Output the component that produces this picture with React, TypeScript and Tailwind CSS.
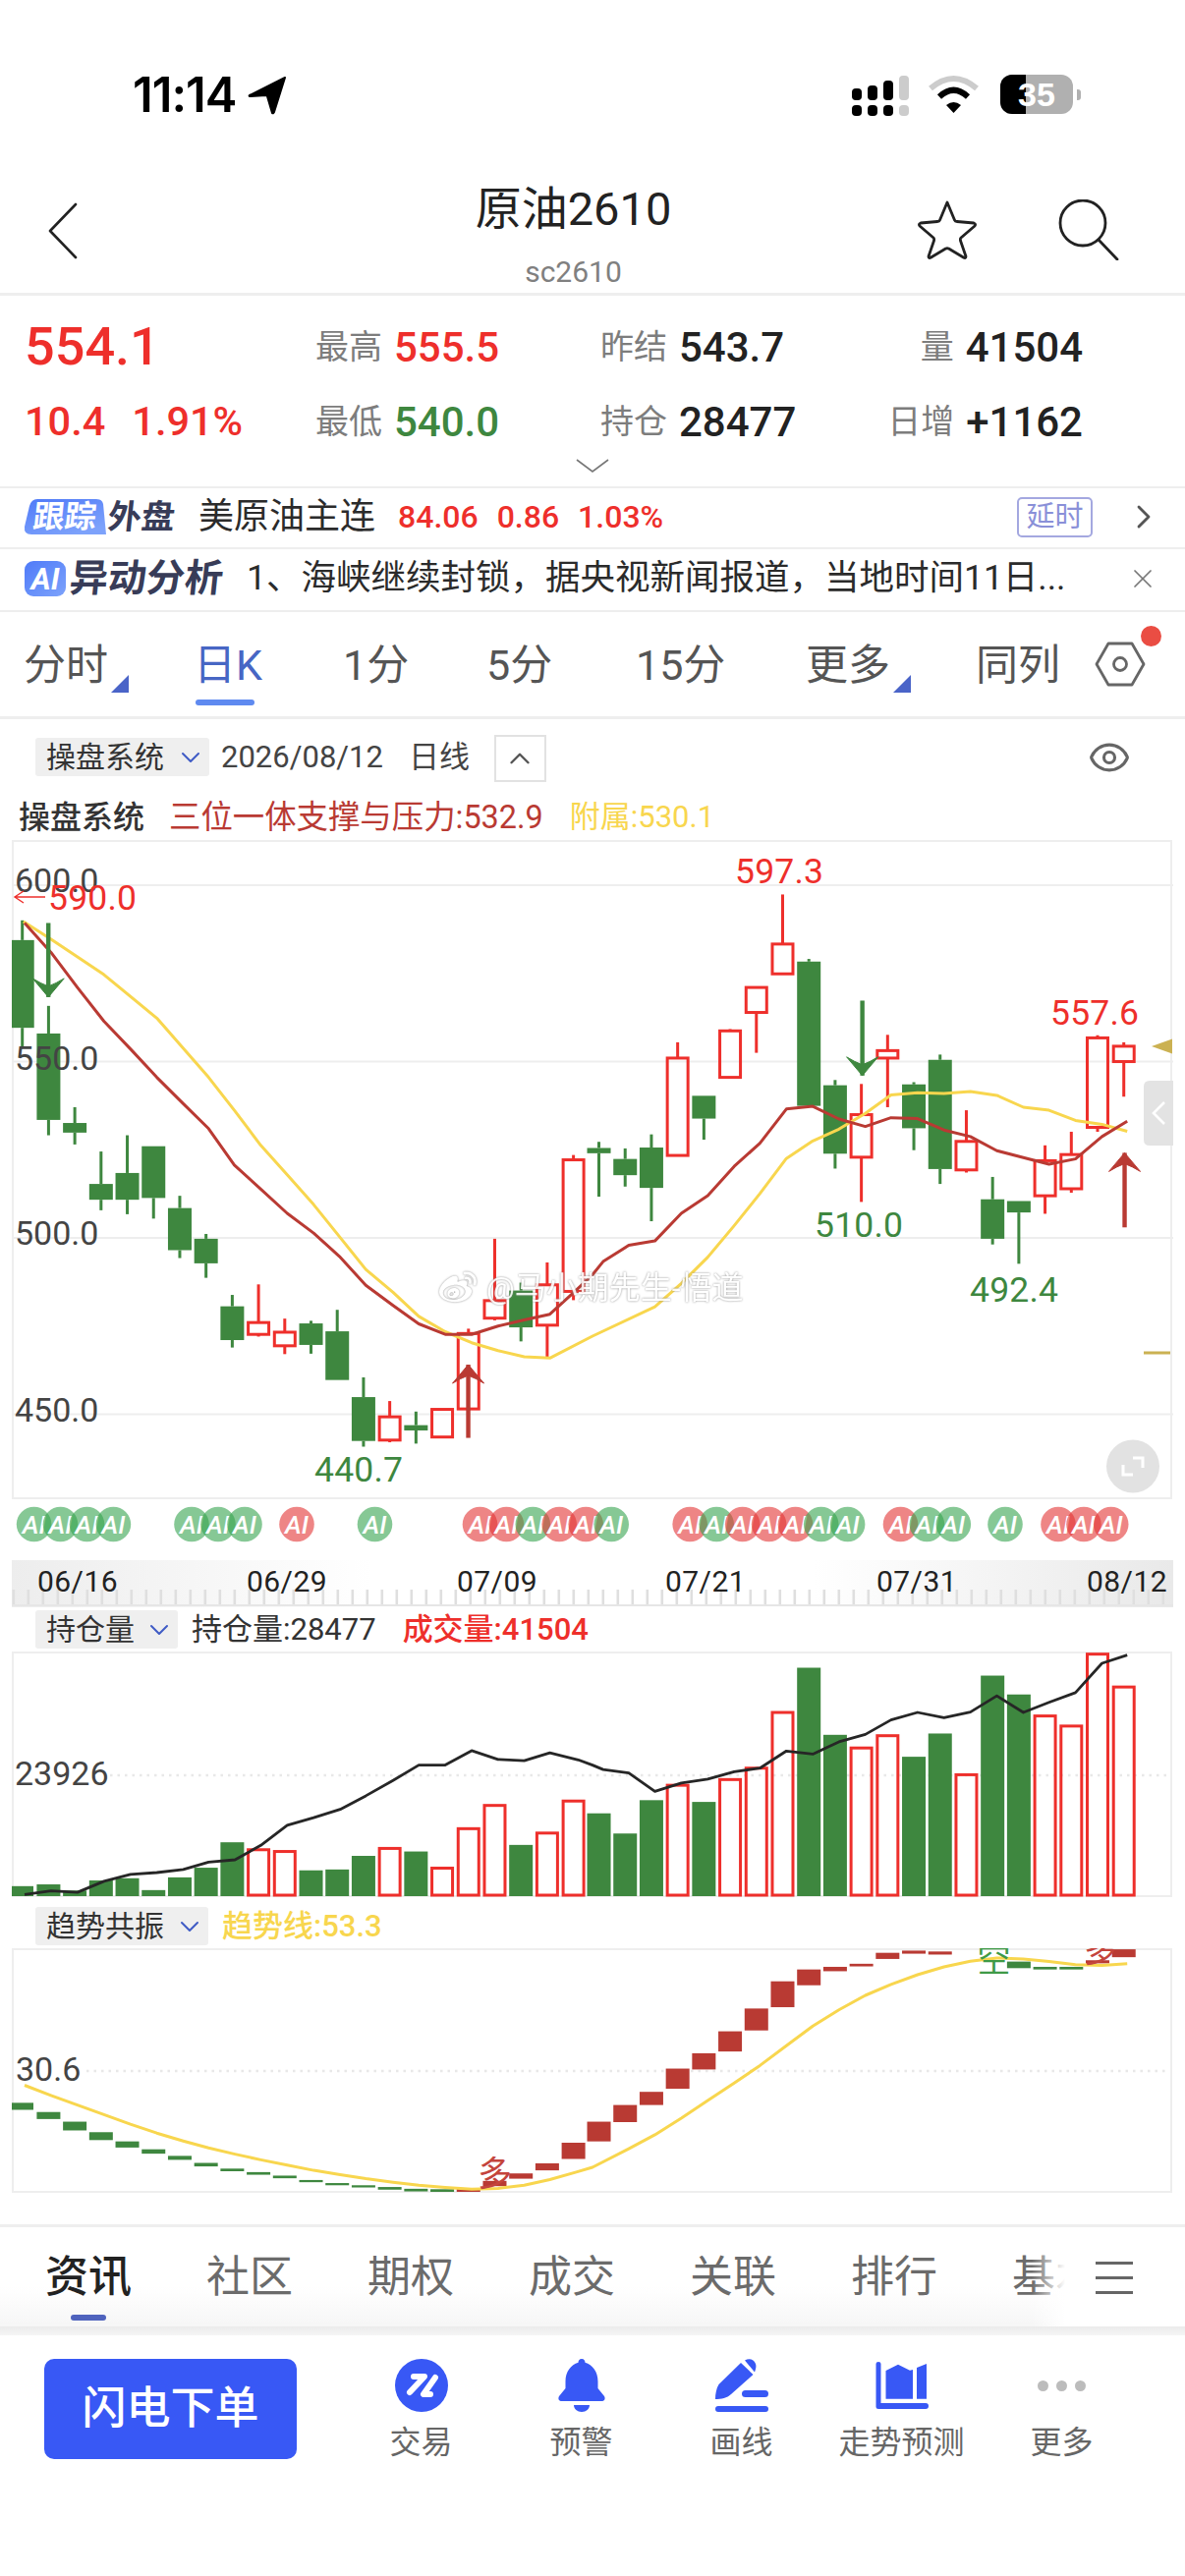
import { ChevronDown, ChevronRight, ChevronUp, Eye, X } from "lucide-react";
import { FaWeibo } from "react-icons/fa";
import type { ReactNode } from "react";

const RED = "#ee2f2b";
const GREEN = "#3e873f";
const DARK_RED = "#b93a33";
const YELLOW = "#f8d64e";

// traced positions: left half and right half of the chart have their own x origin
const lx = (v: number) => v / 2.6;
const rx = (v: number) => 603 + v / 2.6;
const topY = (v: number) => 860 + v / 2.24;
const lowY = (v: number) => 1560 + v / 2.24;
const barX = (i: number) => 22.7 + i * 26.71;

type Candle = [number, number, number, number, "g" | "r"];

const candles: Candle[] = [
  [172, 217, 417, 460, "g"],
  [367, 430, 627, 662, "g"],
  [598, 634, 656, 683, "g"],
  [699, 773, 809, 833, "g"],
  [662, 748, 809, 842, "g"],
  [687, 687, 805, 852, "g"],
  [800, 828, 924, 942, "g"],
  [887, 898, 954, 987, "g"],
  [1026, 1052, 1129, 1146, "g"],
  [1002, 1089, 1116, 1121, "r"],
  [1080, 1111, 1142, 1161, "r"],
  [1085, 1091, 1140, 1160, "g"],
  [1060, 1109, 1220, 1220, "g"],
  [1214, 1259, 1359, 1372, "g"],
  [1268, 1304, 1357, 1362, "r"],
  [1292, 1323, 1335, 1365, "g"],
  [1287, 1287, 1350, 1352, "r"],
  [1103, 1114, 1286, 1290, "r"],
  [898, 1039, 1079, 1084, "r"],
  [998, 1016, 1100, 1132, "g"],
  [952, 1003, 1095, 1170, "r"],
  [707, 718, 1018, 1038, "r"],
  [677, 691, 703, 802, "g"],
  [692, 716, 753, 779, "g"],
  [660, 690, 782, 858, "g"],
  [450, 486, 708, 708, "r"],
  [572, 572, 624, 672, "g"],
  [420, 424, 530, 533, "r"],
  [325, 325, 382, 474, "r"],
  [113, 226, 294, 294, "r"],
  [260, 266, 595, 595, "g"],
  [536, 548, 704, 738, "g"],
  [545, 615, 712, 814, "r"],
  [433, 469, 486, 598, "r"],
  [541, 546, 646, 696, "g"],
  [478, 490, 739, 773, "g"],
  [605, 676, 741, 747, "r"],
  [757, 808, 898, 911, "g"],
  [812, 812, 838, 955, "g"],
  [685, 720, 800, 841, "r"],
  [654, 706, 784, 793, "r"],
  [434, 440, 644, 654, "r"],
  [450, 459, 494, 574, "r"],
];

const volumes: [number, "g" | "r"][] = [
  [806, "g"], [802, "g"], [816, "g"], [793, "g"], [788, "g"], [815, "g"], [786, "g"], [764, "g"], [706, "g"],
  [723, "r"], [727, "r"], [770, "g"], [768, "g"], [737, "g"], [720, "r"], [727, "g"], [765, "r"], [675, "r"],
  [622, "r"], [712, "g"], [685, "r"], [612, "r"], [640, "g"], [686, "g"], [610, "g"], [576, "r"], [614, "g"],
  [563, "r"], [537, "r"], [410, "r"], [308, "g"], [461, "g"], [491, "r"], [463, "r"], [511, "g"], [458, "g"],
  [552, "r"], [326, "g"], [369, "g"], [418, "r"], [441, "r"], [277, "r"], [352, "r"],
];

const trendBars: [number, number, "g" | "r"][] = [
  [1300, 1316, "g"], [1321, 1337, "g"], [1343, 1363, "g"], [1367, 1385, "g"], [1388, 1402, "g"], [1406, 1416, "g"],
  [1421, 1430, "g"], [1437, 1445, "g"], [1450, 1456, "g"], [1458, 1464, "g"], [1466, 1472, "g"], [1476, 1481, "g"],
  [1483, 1488, "g"], [1488, 1493, "g"], [1492, 1498, "g"], [1496, 1502, "g"], [1497, 1503, "g"], [1496, 1503, "r"],
  [1478, 1490, "r"], [1461, 1473, "r"], [1438, 1454, "r"], [1391, 1428, "r"], [1343, 1388, "r"], [1305, 1344, "r"],
  [1275, 1305, "r"], [1222, 1268, "r"], [1187, 1224, "r"], [1137, 1183, "r"], [1085, 1135, "r"], [1023, 1082, "r"],
  [996, 1032, "r"], [990, 1000, "r"], [983, 989, "r"], [958, 972, "r"], [953, 960, "r"], [955, 962, "r"],
  [940, 945, "r"], [946, 950, "g"], [978, 993, "g"], [990, 996, "g"], [990, 996, "g"], [975, 982, "r"], [950, 968, "r"],
];

const yellowLine: [number, number][] = [
  [lx(62), 175], [lx(135), 215], [lx(275), 296], [lx(415), 395], [lx(552), 530], [lx(620), 605], [lx(690), 685],
  [lx(760), 752], [lx(830), 820], [lx(900), 895], [lx(968), 968], [lx(1040), 1020], [lx(1108), 1075], [lx(1178), 1110],
  [lx(1248), 1135], [lx(1318), 1153], [lx(1387), 1167], [lx(1455), 1170], [rx(0), 1120], [rx(165), 1053], [rx(235), 1000],
  [rx(305), 940], [rx(373), 870], [rx(443), 795], [rx(513), 715], [rx(583), 675], [rx(652), 648], [rx(722), 612],
  [rx(790), 570], [rx(860), 565], [rx(930), 567], [rx(1000), 562], [rx(1070), 571], [rx(1140), 598], [rx(1208), 605],
  [rx(1278), 628], [rx(1348), 637], [rx(1415), 653],
];

const redLine: [number, number][] = [
  [lx(65), 178], [lx(135), 245], [lx(205), 325], [lx(275), 402], [lx(345), 465], [lx(415), 530], [lx(485), 590],
  [lx(552), 647], [lx(620), 730], [lx(690), 785], [lx(760), 840], [lx(830), 885], [lx(898), 938], [lx(968), 1004],
  [lx(1040), 1050], [lx(1108), 1092], [lx(1178), 1116], [lx(1248), 1116], [lx(1318), 1097], [lx(1387), 1083], [lx(1455), 1070],
  [lx(1525), 1015], [rx(0), 980], [rx(28), 950], [rx(96), 913], [rx(165), 903], [rx(235), 840], [rx(305), 800],
  [rx(375), 733], [rx(443), 680], [rx(513), 602], [rx(583), 596], [rx(652), 625], [rx(722), 642], [rx(790), 622],
  [rx(860), 624], [rx(930), 650], [rx(1000), 665], [rx(1070), 697], [rx(1140), 713], [rx(1208), 728], [rx(1278), 716],
  [rx(1348), 665], [rx(1415), 630],
];

const holdLine: [number, number][] = [
  [lx(65), 825], [lx(135), 817], [lx(205), 820], [lx(275), 795], [lx(345), 779], [lx(415), 775], [lx(485), 768],
  [lx(552), 751], [lx(622), 746], [lx(690), 713], [lx(760), 667], [lx(830), 650], [lx(900), 631], [lx(968), 600],
  [lx(1040), 565], [lx(1108), 530], [lx(1178), 530], [lx(1248), 497], [lx(1318), 517], [lx(1387), 520], [lx(1455), 502],
  [lx(1530), 518], [rx(0), 530], [rx(28), 540], [rx(96), 548], [rx(165), 590], [rx(235), 571], [rx(305), 562],
  [rx(375), 545], [rx(443), 537], [rx(513), 498], [rx(583), 505], [rx(652), 477], [rx(722), 460], [rx(790), 427],
  [rx(860), 410], [rx(930), 422], [rx(1000), 409], [rx(1070), 372], [rx(1140), 410], [rx(1208), 387], [rx(1278), 365],
  [rx(1348), 298], [rx(1415), 279],
];

const trendLine: [number, number][] = [
  [lx(65), 1260], [lx(135), 1283], [lx(205), 1305], [lx(275), 1327], [lx(345), 1349], [lx(415), 1369], [lx(485), 1387],
  [lx(552), 1403], [lx(622), 1417], [lx(690), 1430], [lx(760), 1442], [lx(830), 1454], [lx(900), 1464], [lx(968), 1473],
  [lx(1040), 1481], [lx(1108), 1488], [lx(1178), 1493], [lx(1248), 1497], [lx(1318), 1495], [lx(1387), 1488], [lx(1455), 1475],
  [lx(1525), 1458], [rx(0), 1447], [rx(96), 1405], [rx(165), 1373], [rx(235), 1335], [rx(305), 1295], [rx(375), 1255],
  [rx(443), 1215], [rx(513), 1170], [rx(583), 1125], [rx(652), 1088], [rx(722), 1055], [rx(790), 1030], [rx(860), 1008],
  [rx(930), 990], [rx(1000), 977], [rx(1070), 970], [rx(1140), 972], [rx(1208), 978], [rx(1278), 985], [rx(1348), 987],
  [rx(1415), 983],
];

const aiBadges: [number, "g" | "r"][] = [
  [34.6, "g"], [61.5, "g"], [88.5, "g"], [115.4, "g"], [195, "g"], [222, "g"], [249, "g"], [302, "r"], [381.5, "g"],
  [488.5, "r"], [515.4, "r"], [542.3, "g"], [569.2, "r"], [596.2, "r"], [622.2, "g"], [702.2, "r"], [729.2, "g"],
  [755.7, "r"], [782.6, "r"], [809.5, "r"], [835.7, "g"], [862.6, "g"], [916.5, "r"], [943.4, "g"], [970.3, "g"],
  [1023, "g"], [1077, "r"], [1103, "r"], [1130.7, "r"],
];

const toPoints = (line: [number, number][], y: (v: number) => number) =>
  line.map(([x, v]) => `${x.toFixed(1)},${y(v).toFixed(1)}`).join(" ");

function AxisLabel({ y, children }: { y: number; children: ReactNode }) {
  return (
    <text x={15} y={y} fill="#444" fontSize={34}>
      {children}
    </text>
  );
}

function PriceMark({ x, y, children, color }: { x: number; y: number; children: ReactNode; color: string }) {
  return (
    <text x={x} y={y} fill={color} fontSize={35.5} letterSpacing={0.2}>
      {children}
    </text>
  );
}

function Arrow({ x, from, to, color }: { x: number; from: number; to: number; color: string }) {
  const dir = to > from ? -1 : 1;
  return (
    <g>
      <rect x={x - 2.2} y={Math.min(from, to)} width={4.4} height={Math.abs(to - from)} fill={color} />
      <path
        d={`M${x} ${to} L${x + 16} ${to + dir * 19} Q${x + 8} ${to + dir * 14} ${x} ${to + dir * 11} Q${x - 8} ${to + dir * 14} ${x - 16} ${to + dir * 19} Z`}
        fill={color}
        stroke={color}
        strokeWidth={1}
      />
    </g>
  );
}

function MainChart() {
  return (
    <div className="relative h-[718px] w-full">
      <svg width={1206} height={718} viewBox="0 855 1206 718" className="block">
        <defs>
          <clipPath id="mainClip">
            <rect x={12} y={855} width={1182} height={670} />
          </clipPath>
        </defs>
        <rect x={13} y={856} width={1179} height={669} fill="none" stroke="#eeeeee" strokeWidth={2} />
        {[901, 1080.5, 1260, 1439.5].map((y) => (
          <rect key={y} x={13} y={y - 1} width={1181} height={2} fill="#eeeeee" />
        ))}
        <g clipPath="url(#mainClip)">
          {candles.map(([wickTop, bodyTop, bodyBottom, wickBottom, kind], i) => {
            const x = i < 22 ? barX(i) : barX(i) - 0.8;
            const color = kind === "g" ? GREEN : RED;
            return (
              <g key={i}>
                <rect x={x - 1.5} y={topY(wickTop)} width={3} height={topY(bodyTop) - topY(wickTop)} fill={color} />
                <rect x={x - 1.5} y={topY(bodyBottom)} width={3} height={topY(wickBottom) - topY(bodyBottom)} fill={color} />
                {kind === "g" ? (
                  <rect x={x - 12} y={topY(bodyTop)} width={24} height={topY(bodyBottom) - topY(bodyTop)} fill={color} />
                ) : (
                  <rect
                    x={x - 10.5}
                    y={topY(bodyTop)}
                    width={21}
                    height={Math.max(topY(bodyBottom) - topY(bodyTop), 4)}
                    fill="none"
                    stroke={color}
                    strokeWidth={3}
                  />
                )}
              </g>
            );
          })}
          <polyline points={toPoints(yellowLine, topY)} fill="none" stroke={YELLOW} strokeWidth={3} strokeLinejoin="round" />
          <polyline points={toPoints(redLine, topY)} fill="none" stroke={DARK_RED} strokeWidth={3} strokeLinejoin="round" />
        </g>

        <Arrow x={lx(128)} from={topY(178)} to={topY(347)} color={GREEN} />
        <Arrow x={rx(714)} from={topY(355)} to={topY(526)} color={GREEN} />
        <Arrow x={lx(1239)} from={topY(1352)} to={topY(1185)} color={DARK_RED} />
        <Arrow x={rx(1408)} from={topY(872)} to={topY(702)} color={DARK_RED} />

        <AxisLabel y={908}>600.0</AxisLabel>
        <AxisLabel y={1088.5}>550.0</AxisLabel>
        <AxisLabel y={1267}>500.0</AxisLabel>
        <AxisLabel y={1447}>450.0</AxisLabel>

        <path d="M46 913 H15 M24 907 L15 913 L24 919" fill="none" stroke={RED} strokeWidth={1.4} />
        <PriceMark x={49} y={926} color={RED}>590.0</PriceMark>
        <PriceMark x={748} y={899} color={RED}>597.3</PriceMark>
        <PriceMark x={1069} y={1043} color={RED}>557.6</PriceMark>
        <PriceMark x={829} y={1259} color={GREEN}>510.0</PriceMark>
        <PriceMark x={987} y={1325} color={GREEN}>492.4</PriceMark>
        <PriceMark x={320} y={1508} color={GREEN}>440.7</PriceMark>

        <path d="M1172 1065 L1193 1057.5 V1072.5 Z" fill="#cbb152" />
        <rect x={1164} y={1375.5} width={27} height={3} fill="#cbb152" />

        <path d="M1194 1100 H1170 Q1164 1100 1164 1106 V1160 Q1164 1166 1170 1166 H1194 Z" fill="#e3e3e3" />
        <path d="M1185 1122 L1174 1133 L1185 1144" fill="none" stroke="#ffffff" strokeWidth={2.6} />

        <circle cx={1153} cy={1492.5} r={27} fill="#e2e2e2" />
        <path d="M1153 1484 H1163 V1494 M1143 1491 V1501 H1153" fill="none" stroke="#ffffff" strokeWidth={3} />

        {aiBadges.map(([x, kind], i) => (
          <g key={i}>
            <circle cx={x} cy={1551.5} r={17.8} fill={kind === "g" ? "#35a44e" : "#e33434"} opacity={0.6} />
            <text x={x} y={1560.5} textAnchor="middle" fill="#ffffff" fontSize={26} fontStyle="italic" fontWeight={500}>
              AI
            </text>
          </g>
        ))}
      </svg>
      <div className="absolute left-[444px] top-[437px] flex items-center gap-[7px] text-[32px] leading-none text-white opacity-90 [filter:drop-shadow(0_0_1px_#8a8a8a)]">
        <FaWeibo className="h-[38px] w-[44px]" />
        <span>@马小期先生-悟道</span>
      </div>
    </div>
  );
}

function TimeAxis() {
  const ticks = Array.from({ length: 79 }, (_, i) => 12.5 + i * 15);
  const dates = [
    ["06/16", 79],
    ["06/29", 292],
    ["07/09", 506],
    ["07/21", 718],
    ["07/31", 933],
    ["08/12", 1147],
  ] as const;
  return (
    <svg width={1206} height={66} viewBox="0 1573 1206 66" className="block">
      <defs>
        <linearGradient id="axisFade" x1="0" x2="1" y1="0" y2="0">
          <stop offset="0" stopColor="#ededed" />
          <stop offset="0.31" stopColor="#ffffff" />
          <stop offset="0.69" stopColor="#ffffff" />
          <stop offset="1" stopColor="#e9e9e9" />
        </linearGradient>
      </defs>
      <rect x={12} y={1588} width={1182} height={48} fill="url(#axisFade)" />
      {ticks.map((x) => (
        <rect key={x} x={x} y={1618} width={2.6} height={16} fill="#dfdfdf" />
      ))}
      <rect x={12} y={1633} width={1182} height={2} fill="#e6e6e6" />
      {dates.map(([label, x]) => (
        <text key={label} x={x} y={1620} textAnchor="middle" fill="#222222" fontSize={30} letterSpacing={0.4}>
          {label}
        </text>
      ))}
    </svg>
  );
}

function VolumeChart() {
  return (
    <svg width={1206} height={251} viewBox="0 1681 1206 251" className="block">
      <rect x={13} y={1682} width={1179} height={248} fill="none" stroke="#eeeeee" strokeWidth={2} />
      <line x1={112} x2={1190} y1={1807} y2={1807} stroke="#e8e8e8" strokeWidth={2.5} strokeDasharray="2.5 5" />
      {volumes.map(([top, kind], i) => {
        const x = i < 22 ? barX(i) : barX(i) - 0.8;
        const y = lowY(top);
        return kind === "g" ? (
          <rect key={i} x={i === 0 ? 12 : x - 12} y={y} width={i === 0 ? 22 : 24} height={1930 - y} fill={GREEN} />
        ) : (
          <rect key={i} x={x - 10.5} y={y} width={21} height={1929 - y} fill="none" stroke={RED} strokeWidth={3} />
        );
      })}
      <polyline points={toPoints(holdLine, lowY)} fill="none" stroke="#262626" strokeWidth={2.8} strokeLinejoin="round" />
      <text x={15} y={1817} fill="#444" fontSize={34}>
        23926
      </text>
    </svg>
  );
}

function TrendChart() {
  return (
    <svg width={1206} height={250} viewBox="0 1983 1206 250" className="block">
      <defs>
        <clipPath id="trendClip">
          <rect x={12} y={1983} width={1180} height={249} />
        </clipPath>
      </defs>
      <rect x={13} y={1984} width={1179} height={247} fill="none" stroke="#eeeeee" strokeWidth={2} />
      <line x1={88} x2={1190} y1={2108} y2={2108} stroke="#e8e8e8" strokeWidth={2.5} strokeDasharray="2.5 5" />
      <g clipPath="url(#trendClip)">
        {trendBars.map(([top, bottom, kind], i) => {
          const x = i < 22 ? barX(i) : barX(i) - 0.8;
          return (
            <rect
              key={i}
              x={i === 0 ? 12 : x - 12}
              y={lowY(top)}
              width={i === 0 ? 22 : 24}
              height={lowY(bottom) - lowY(top)}
              fill={kind === "g" ? GREEN : DARK_RED}
            />
          );
        })}
        <polyline points={toPoints(trendLine, lowY)} fill="none" stroke={YELLOW} strokeWidth={3} strokeLinejoin="round" />
        <text x={503.5} y={2225} textAnchor="middle" fill="#c4443c" fontSize={35}>
          多
        </text>
        <text x={1011.5} y={2007} textAnchor="middle" fill="#3f9a47" fontSize={34}>
          空
        </text>
        <text x={1119.5} y={1997} textAnchor="middle" fill="#c4443c" fontSize={33}>
          多
        </text>
      </g>
      <text x={16} y={2118} fill="#444" fontSize={34}>
        30.6
      </text>
    </svg>
  );
}

function SelectChip({ label, width }: { label: string; width: string }) {
  return (
    <div className={`flex h-[39px] items-center justify-between rounded-[3px] bg-[#efefef] pl-[11px] pr-[3px] text-[30px] text-[#333] ${width}`}>
      <span>{label}</span>
      <ChevronDown size={32} strokeWidth={1.5} className="text-[#3f5bc5]" />
    </div>
  );
}

function Triangle() {
  return <span className="absolute -bottom-[2px] -right-[21px] h-[18px] w-[18px] bg-[#4a64c8] [clip-path:polygon(100%_0,100%_100%,0_100%)]" />;
}

function StatusBar() {
  return (
    <div className="flex h-[170px] items-start justify-between pl-[135px] pr-[106px] pt-[72px]">
      <div className="flex items-center gap-[12px]">
        <span className="font-['Inter',sans-serif] text-[49px] font-semibold leading-[50px] tracking-[-1px] text-black">11:14</span>
        <svg width={40} height={40} viewBox="0 0 40 40" fill="#000">
          <path d="M38 2 L2 20 Q1 21 3 21 L19 20 Q20 20 20 21 L25 38 Q26 39 27 37 Z" stroke="#000" strokeWidth={2} strokeLinejoin="round" />
        </svg>
      </div>
      <div className="flex items-start pt-[4px]">
        <svg width={60} height={42} viewBox="0 0 60 42" className="mr-[19px] mt-[1px]">
          <rect x={1} y={13} width={10} height={12} rx={4} fill="#000" />
          <rect x={17} y={10} width={10} height={15} rx={4} fill="#000" />
          <rect x={33} y={5} width={10} height={20} rx={4} fill="#000" />
          <rect x={49} y={0} width={10} height={25} rx={4} fill="#ccc" />
          <rect x={1} y={30} width={10} height={11} rx={4} fill="#000" />
          <rect x={17} y={30} width={10} height={11} rx={4} fill="#000" />
          <rect x={33} y={30} width={10} height={11} rx={4} fill="#000" />
          <rect x={49} y={30} width={10} height={11} rx={4} fill="#ccc" />
        </svg>
        <svg width={51} height={40} viewBox="0 0 51 40" className="mr-[22px]">
          <path d="M2 14 Q25.5 -6 49 14" fill="none" stroke="#ccc" strokeWidth={6} />
          <path d="M11 22.5 Q25.5 9 40 22.5" fill="none" stroke="#000" strokeWidth={6} />
          <path d="M18 31 Q25.5 25 33 31 L25.5 39 Z" fill="#000" />
        </svg>
        <div className="flex items-center">
          <div className="relative flex h-[40px] w-[74px] items-center justify-center overflow-hidden rounded-[12px] bg-[#b0b0b0]">
            <span className="absolute inset-y-0 left-0 w-[26px] bg-black" />
            <span className="relative font-['Liberation_Sans',sans-serif] text-[34px] font-bold leading-none text-white">35</span>
          </div>
          <span className="ml-[4px] h-[11px] w-[4px] rounded-r-[3px] bg-[#b0b0b0]" />
        </div>
      </div>
    </div>
  );
}

function Header() {
  return (
    <div className="flex h-[131px] items-start border-b-[3px] border-[#eeeeee]">
      <div className="w-[485px] pl-[46px] pt-[36px]">
        <svg width={36} height={58} viewBox="0 0 36 58">
          <path d="M31 2 L5 29 L31 56" fill="none" stroke="#222" strokeWidth={2.6} strokeLinecap="round" strokeLinejoin="round" />
        </svg>
      </div>
      <div className="flex w-[197px] flex-col items-center pt-[14px]">
        <span className="whitespace-nowrap text-[47px] leading-[58px] text-[#222]">原油2610</span>
        <span className="mt-[17px] text-[30px] leading-[36px] text-[#808080]">sc2610</span>
      </div>
      <div className="ml-[251px] flex items-start gap-[82px] pt-[33px]">
        <svg width={62} height={62} viewBox="0 0 62 62">
          <path
            d="M31 3 L38.5 21 Q39 22.5 41 22.5 L58 24 Q60.5 25 59 27 L45 39 Q44 40 44.5 42 L50 58 Q50 60.5 47.5 59 L32.5 50 Q31 49.5 29.5 50 L14.5 59 Q12 60.5 12 58 L17.5 42 Q18 40 17 39 L3 27 Q1.5 25 4 24 L21 22.5 Q23 22.5 23.5 21 Z"
            fill="none"
            stroke="#222"
            strokeWidth={2.8}
            strokeLinejoin="round"
          />
        </svg>
        <svg width={62} height={62} viewBox="0 0 62 62">
          <circle cx={25} cy={24} r={23} fill="none" stroke="#222" strokeWidth={2.8} />
          <path d="M41 41 L60 61" stroke="#222" strokeWidth={2.8} strokeLinecap="round" />
        </svg>
      </div>
    </div>
  );
}

function Stat({ label, value, color = "#222", right }: { label: string; value: string; color?: string; right?: boolean }) {
  return (
    <div className={`flex items-center gap-[12px] whitespace-nowrap ${right ? "justify-end" : ""}`}>
      <span className="text-[34px] text-[#7d7d7d]">{label}</span>
      <span className="text-[42px] font-medium" style={{ color }}>
        {value}
      </span>
    </div>
  );
}

function QuotePanel() {
  return (
    <div className="h-[196px] border-b-2 border-[#eeeeee] pl-[25px] pr-[104px] pt-[14px]">
      <div className="grid grid-cols-[296px_290px_1fr] grid-rows-[76px_76px] items-center">
        <span className="text-[54px] font-medium leading-none text-[#ee2f2b]">554.1</span>
        <Stat label="最高" value="555.5" color={RED} />
        <div className="flex items-center justify-between">
          <Stat label="昨结" value="543.7" />
          <Stat label="量" value="41504" right />
        </div>
        <div className="flex gap-[27px] whitespace-nowrap text-[41.5px] font-medium leading-none text-[#ee2f2b]">
          <span>10.4</span>
          <span>1.91%</span>
        </div>
        <Stat label="最低" value="540.0" color={GREEN} />
        <div className="flex items-center justify-between">
          <Stat label="持仓" value="28477" />
          <Stat label="日增" value="+1162" right />
        </div>
      </div>
      <div className="-ml-[25px] -mr-[104px] flex justify-center">
        <svg width={34} height={14} viewBox="0 0 34 14">
          <path d="M1 1 L17 13 L33 1" fill="none" stroke="#777" strokeWidth={1.6} />
        </svg>
      </div>
    </div>
  );
}

function ForeignRow() {
  return (
    <div className="flex h-[62px] items-center border-b-2 border-[#eeeeee] pl-[24px] pr-[22px] pb-[2px]">
      <div className="relative flex h-[36px] w-[84px] items-center justify-center">
        <svg width={84} height={36} viewBox="0 0 84 36" className="absolute inset-0">
          <defs>
            <linearGradient id="tagBlue" x1="0" x2="0.6" y1="0" y2="1">
              <stop offset="0" stopColor="#4f7af8" />
              <stop offset="1" stopColor="#7da2fb" />
            </linearGradient>
          </defs>
          <path d="M14 0 H74 Q80 0 81 5 L84 36 H8 Q0 36 1 28 L6 7 Q8 0 14 0 Z" fill="url(#tagBlue)" />
        </svg>
        <span className="relative -skew-x-6 text-[32px] font-bold leading-none text-white">跟踪</span>
      </div>
      <span className="ml-[2px] inline-block -skew-x-6 text-[34px] font-bold leading-none text-[#383c58]">外盘</span>
      <span className="ml-[24px] text-[36px] leading-none text-[#2b2b2b]">美原油主连</span>
      <div className="ml-[23px] flex gap-[19px] text-[32px] font-medium leading-none text-[#ee2f2b]">
        <span>84.06</span>
        <span>0.86</span>
        <span>1.03%</span>
      </div>
      <span className="ml-auto flex h-[41px] w-[77px] items-center justify-center rounded-[5px] border-2 border-[#a4a8e0] text-[29px] leading-none text-[#8a90d8]">
        延时
      </span>
      <ChevronRight size={40} strokeWidth={1.7} className="ml-[32px] text-[#555]" />
    </div>
  );
}

function NewsRow() {
  return (
    <div className="flex h-[64px] items-center border-b-2 border-[#eeeeee] pl-[25px] pr-[26px] pb-[2px]">
      <span className="flex h-[36px] w-[42px] items-center justify-center rounded-[9px] bg-gradient-to-br from-[#4f7af8] to-[#7da2fb] text-[31px] font-bold italic leading-none text-white">
        AI
      </span>
      <span className="ml-[4px] inline-block -skew-x-6 text-[39px] font-bold leading-none text-[#383c58]">异动分析</span>
      <span className="ml-[24px] whitespace-nowrap text-[35.5px] leading-none text-[#2b2b2b]">
        1、海峡继续封锁，据央视新闻报道，当地时间11日...
      </span>
      <X size={32} strokeWidth={1.3} className="ml-auto mr-[1px] text-[#777]" />
    </div>
  );
}

function PeriodTabs() {
  return (
    <div className="relative grid h-[109px] grid-cols-[173px_152px_146px_152px_173px_173px_auto] items-start border-b-[3px] border-[#eeeeee] pl-[24px] pt-[28px] text-[43px] leading-[52px] text-[#555]">
      <span className="relative w-fit">
        分时
        <Triangle />
      </span>
      <span className="relative w-fit text-[#4766c4]">
        日K
        <span className="absolute -bottom-[15px] left-[2px] h-[6px] w-[60px] rounded-full bg-[#5f8af0]" />
      </span>
      <span>1分</span>
      <span>5分</span>
      <span>15分</span>
      <span className="relative w-fit">
        更多
        <Triangle />
      </span>
      <span>同列</span>
      <svg width={52} height={46} viewBox="0 0 52 46" className="absolute left-[1114px] top-[30px]">
        <path d="M14 2 H38 L50 23 L38 44 H14 L2 23 Z" fill="none" stroke="#666" strokeWidth={2.8} strokeLinejoin="round" />
        <circle cx={26} cy={23} r={6.5} fill="none" stroke="#666" strokeWidth={2.8} />
      </svg>
      <span className="absolute left-[1161px] top-[14px] h-[21px] w-[21px] rounded-full bg-[#ea4d43]" />
    </div>
  );
}

function ChartToolbar() {
  return (
    <>
      <div className="relative flex h-[75px] items-start pl-[36px] pt-[19px]">
        <SelectChip label="操盘系统" width="w-[177px]" />
        <span className="ml-[12px] text-[31px] leading-[39px] text-[#444]">2026/08/12</span>
        <span className="ml-[26px] text-[31px] leading-[39px] text-[#444]">日线</span>
        <span className="ml-[25px] -mt-[3px] flex h-[48px] w-[53px] items-center justify-center border-2 border-[#e2e2e2]">
          <ChevronUp size={34} strokeWidth={1.7} className="text-[#555]" />
        </span>
        <Eye size={44} strokeWidth={1.7} className="absolute left-[1107px] top-[17px] text-[#666]" />
      </div>
      <div className="flex h-[48px] items-start whitespace-nowrap pl-[19px] pt-[5px] text-[32px] leading-[40px]">
        <span className="font-medium text-[#333]">操盘系统</span>
        <span className="ml-[25px] text-[32.4px] text-[#b93a33]">三位一体支撑与压力:532.9</span>
        <span className="ml-[27px] text-[31px] text-[#f8d64e]">附属:530.1</span>
      </div>
    </>
  );
}

function NavIcon({ label, children }: { label: string; children: ReactNode }) {
  return (
    <div className="flex w-[163px] flex-col items-center">
      <div className="flex h-[54px] items-center justify-center">{children}</div>
      <span className="mt-[12px] whitespace-nowrap text-[32px] leading-[38px] text-[#666]">{label}</span>
    </div>
  );
}

function BottomBar() {
  return (
    <div className="flex items-start pl-[45px] pt-[24px]">
      <button type="button" className="mr-[45px] flex h-[102px] w-[257px] items-center justify-center rounded-[10px] bg-[#3858f5] text-[45px] font-medium text-white">
        闪电下单
      </button>
      <NavIcon label="交易">
        <svg width={54} height={54} viewBox="0 0 54 54">
          <circle cx={27} cy={27} r={27} fill="#3858f5" />
          <path d="M19 18 H30 L15 34 M41 19 L29 36 H36" fill="none" stroke="#fff" strokeWidth={6} strokeLinecap="round" strokeLinejoin="round" />
        </svg>
      </NavIcon>
      <NavIcon label="预警">
        <svg width={50} height={54} viewBox="0 0 50 54" fill="#3858f5">
          <path d="M25 0 C27.5 0 28.5 2 28.5 3.8 C36 6 41.5 13 41.5 23 V30 L48 38 C49.5 41 48 43 45 43 H5 C2 43 0.5 41 2 38 L8.5 30 V23 C8.5 13 14 6 21.5 3.8 C21.5 2 22.5 0 25 0 Z" />
          <path d="M17 47 H33 C33 51 29.5 54 25 54 C20.5 54 17 51 17 47 Z" />
        </svg>
      </NavIcon>
      <NavIcon label="画线">
        <svg width={54} height={54} viewBox="0 0 54 54" fill="#3858f5">
          <path d="M26 4 L3.5 26 C1 30 0 36 0 41 C6 41 12 40 16 36 L38.5 16 Z" />
          <path d="M30 1.5 C34 -1 39.5 0 41 5 C42 8 41 11 40 13.5 Z" />
          <rect x={27} y={32} width={27} height={7} rx={3.5} />
          <rect x={0} y={48} width={54} height={6} rx={3} />
        </svg>
      </NavIcon>
      <NavIcon label="走势预测">
        <svg width={54} height={48} viewBox="0 0 54 48" fill="#3858f5">
          <path d="M0.5 2 Q0.5 0 3 0 Q5.5 0 5.5 2 V42 H51 Q54 42 54 45 Q54 48 51 48 H3 Q0.5 48 0.5 46 Z" />
          <path d="M10.5 9 L23 2.7 L35 8.7 L38 8 V37.7 H10.5 Z" />
          <path d="M42 6 L52 2 V37.7 H42 Z" />
        </svg>
      </NavIcon>
      <NavIcon label="更多">
        <div className="flex gap-[8px]">
          <span className="h-[11px] w-[11px] rounded-full bg-[#bcbcbc]" />
          <span className="h-[11px] w-[11px] rounded-full bg-[#bcbcbc]" />
          <span className="h-[11px] w-[11px] rounded-full bg-[#bcbcbc]" />
        </div>
      </NavIcon>
    </div>
  );
}

export default function App() {
  const tabs = ["资讯", "社区", "期权", "成交", "关联", "排行"];
  return (
    <div className="relative h-[2622px] w-[1206px] overflow-hidden bg-white font-['Roboto','Noto_Sans_CJK_SC',sans-serif]">
      <StatusBar />
      <Header />
      <QuotePanel />
      <ForeignRow />
      <NewsRow />
      <PeriodTabs />
      <ChartToolbar />
      <MainChart />
      <TimeAxis />
      <div className="flex h-[42px] items-start whitespace-nowrap pl-[36px]">
        <SelectChip label="持仓量" width="w-[145px]" />
        <span className="ml-[14px] text-[31px] leading-[39px] text-[#333]">持仓量:28477</span>
        <span className="ml-[27px] text-[31px] font-medium leading-[39px] text-[#ee2f2b]">成交量:41504</span>
      </div>
      <VolumeChart />
      <div className="flex h-[51px] items-start whitespace-nowrap pl-[36px] pt-[9px]">
        <SelectChip label="趋势共振" width="w-[176px]" />
        <span className="ml-[14px] text-[31px] font-medium leading-[39px] text-[#f8d64e]">趋势线:53.3</span>
      </div>
      <TrendChart />
      <div className="h-[31px]" />
      <div className="relative grid h-[104px] grid-cols-[repeat(7,164px)] items-start overflow-hidden border-t-[3px] border-[#eeeeee] bg-gradient-to-b from-white from-60% to-[#f6f6f6] pl-[8px] pt-[24px] text-[44px] leading-[54px] text-[#6b6b6b]">
        {tabs.map((tab, i) => (
          <span key={tab} className={`text-center ${i === 0 ? "font-medium text-[#222]" : ""}`}>
            {tab}
            {i === 0 && <span className="mx-auto -mt-[1px] block h-[6px] w-[36px] translate-y-[12px] rounded-full bg-[#4f63bd]" />}
          </span>
        ))}
        <span className="text-center">基本</span>
        <span className="absolute inset-y-0 left-[1050px] w-[34px] bg-gradient-to-r from-transparent to-white" />
        <span className="absolute inset-y-0 left-[1084px] w-[122px] bg-white" />
        <span className="absolute left-[1115px] top-[35px] flex h-[33px] w-[38px] flex-col justify-between">
          <span className="h-[3px] bg-[#666]" />
          <span className="h-[3px] bg-[#666]" />
          <span className="h-[3px] bg-[#666]" />
        </span>
      </div>
      <div className="h-[9px] bg-gradient-to-b from-[#ebebeb] to-[#f5f5f5]" />
      <BottomBar />
    </div>
  );
}
